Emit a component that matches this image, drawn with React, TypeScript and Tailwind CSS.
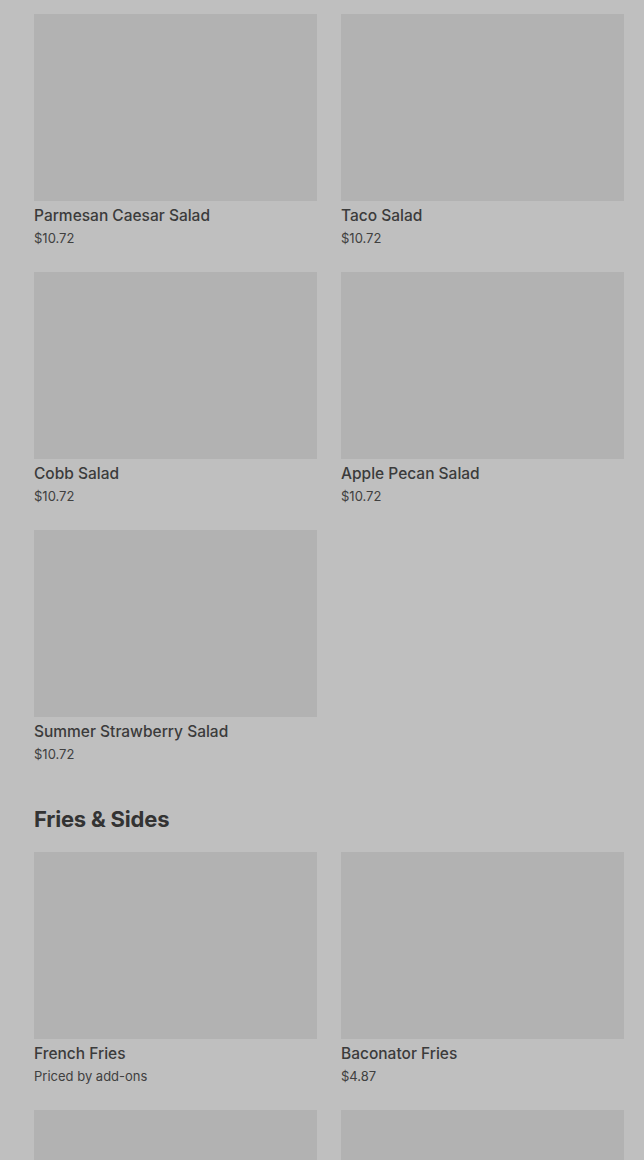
import React from 'react';

interface MenuItem {
  name?: string;
  price?: string;
}

interface MenuSection {
  title?: string;
  items: MenuItem[];
}

const SECTIONS: MenuSection[] = [
  {
    items: [
      { name: 'Parmesan Caesar Salad', price: '$10.72' },
      { name: 'Taco Salad', price: '$10.72' },
      { name: 'Cobb Salad', price: '$10.72' },
      { name: 'Apple Pecan Salad', price: '$10.72' },
      { name: 'Summer Strawberry Salad', price: '$10.72' },
    ],
  },
  {
    title: 'Fries & Sides',
    items: [
      { name: 'French Fries', price: 'Priced by add-ons' },
      { name: 'Baconator Fries', price: '$4.87' },
      // next row is scrolled past the bottom edge, only the images show
      {},
      {},
    ],
  },
];

const ItemCard = ({ item }: { item: MenuItem }) => (
  <div className="flex flex-col">
    <div className="h-[187px] w-full bg-[#b2b2b2]" />
    {item.name && (
      <p className="mt-[5px] text-[15.5px] leading-5 font-medium text-[#3b3b3b]">{item.name}</p>
    )}
    {item.price && (
      <p className="mt-[3px] text-[13px] leading-[18px] text-[#404040]">{item.price}</p>
    )}
  </div>
);

export default function App() {
  return (
    <div
      className="h-[1160px] overflow-hidden bg-[#bfbfbf] pt-[14px] pl-[34px] pr-[20px]"
      style={{ fontFamily: 'Inter, "Noto Sans", sans-serif' }}
    >
      {SECTIONS.map((section, i) => (
        <section key={i} className={i > 0 ? 'mt-10' : ''}>
          {section.title && (
            <h2 className="mb-[17px] text-[22px] leading-8 font-bold tracking-[-0.2px] text-[#333333]">
              {section.title}
            </h2>
          )}
          <div className="grid grid-cols-2 gap-x-6 gap-y-[25px]">
            {section.items.map((item, j) => (
              <ItemCard key={j} item={item} />
            ))}
          </div>
        </section>
      ))}
    </div>
  );
}
